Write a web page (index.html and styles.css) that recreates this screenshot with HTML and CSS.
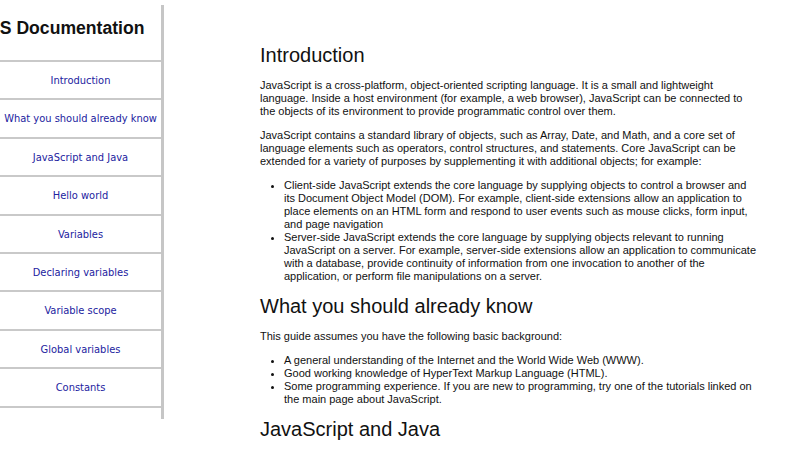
FILE: index.html
```
<!DOCTYPE html>
<html>
<head>
<meta charset="utf-8">
<link rel="stylesheet" href="styles.css">
</head>
<body>
<div class="page">
  <nav class="navbar">
    <header class="nav-header"><span class="nav-title">JS Documentation</span></header>
    <ul class="nav-list">
      <li><a class="nav-link" href="#Introduction">Introduction</a></li>
      <li><a class="nav-link" href="#What">What you should already know</a></li>
      <li><a class="nav-link" href="#JSJava">JavaScript and Java</a></li>
      <li><a class="nav-link" href="#Hello">Hello world</a></li>
      <li><a class="nav-link" href="#Variables">Variables</a></li>
      <li><a class="nav-link" href="#Declaring">Declaring variables</a></li>
      <li><a class="nav-link" href="#Scope">Variable scope</a></li>
      <li><a class="nav-link" href="#Global">Global variables</a></li>
      <li><a class="nav-link" href="#Constants">Constants</a></li>
    </ul>
  </nav>
  <main class="main">
    <section class="section" id="Introduction">
      <h2 class="section-title">Introduction</h2>
      <p class="text">JavaScript is a cross-platform, object-oriented scripting language. It is a small and lightweight language. Inside a host environment (for example, a web browser), JavaScript can be connected to the objects of its environment to provide programmatic control over them.</p>
      <p class="text">JavaScript contains a standard library of objects, such as Array, Date, and Math, and a core set of language elements such as operators, control structures, and statements. Core JavaScript can be extended for a variety of purposes by supplementing it with additional objects; for example:</p>
      <ul class="list">
        <li>Client-side JavaScript extends the core language by supplying objects to control a browser and its Document Object Model (DOM). For example, client-side extensions allow an application to place elements on an HTML form and respond to user events such as mouse clicks, form input, and page navigation</li>
        <li>Server-side JavaScript extends the core language by supplying objects relevant to running JavaScript on a server. For example, server-side extensions allow an application to communicate with a database, provide continuity of information from one invocation to another of the application, or perform file manipulations on a server.</li>
      </ul>
    </section>
    <section class="section" id="What">
      <h2 class="section-title">What you should already know</h2>
      <p class="text">This guide assumes you have the following basic background:</p>
      <ul class="list">
        <li>A general understanding of the Internet and the World Wide Web (WWW).</li>
        <li>Good working knowledge of HyperText Markup Language (HTML).</li>
        <li>Some programming experience. If you are new to programming, try one of the tutorials linked on the main page about JavaScript.</li>
      </ul>
    </section>
    <section class="section" id="JSJava">
      <h2 class="section-title">JavaScript and Java</h2>
      <p class="text">JavaScript and Java are similar in some ways but fundamentally different in some others.</p>
    </section>
  </main>
</div>
</body>
</html>
```
FILE: styles.css
```
html, body {
  margin: 0;
  padding: 0;
  background: #fff;
  overflow: hidden;
}
.page {
  display: flex;
  align-items: flex-start;
  height: 450px;
  overflow: hidden;
}
.navbar {
  flex: 0 0 161px;
  width: 161px;
  margin-top: 5px;
  padding-bottom: 11px;
  border-right: 3px solid #c6c6c6;
  font-family: "DejaVu Sans Condensed", "DejaVu Sans", sans-serif;
}
.nav-header {
  height: 55px;
  box-sizing: border-box;
  padding-top: 13px;
  white-space: nowrap;
}
.nav-title {
  display: block;
  margin-left: -10px;
  font-family: "Liberation Sans", Arial, sans-serif;
  font-weight: bold;
  font-size: 17.6px;
  color: #111;
}
.nav-list {
  list-style: none;
  margin: 0;
  padding: 0;
}
.nav-list li {
  border-top: 2px solid #c9c9c9;
}
.nav-list li:last-child {
  border-bottom: 2px solid #c9c9c9;
}
.nav-link {
  display: block;
  padding: 11px 0 10px 0;
  line-height: 15.4px;
  font-size: 11px;
  text-align: center;
  color: #2222a0;
  text-decoration: none;
  white-space: nowrap;
}
.main {
  flex: 1;
  padding: 0 41px 0 96px;
  font-family: "Liberation Sans", Arial, sans-serif;
  color: #111;
  font-size: 11px;
  line-height: 13px;
}
.section-title {
  font-weight: normal;
  font-size: 20px;
  line-height: 23px;
  margin: 44px 0 12px 0;
}
.section + .section .section-title {
  margin-top: 12px;
}
.text {
  margin: 0 0 11px 0;
}
.list {
  margin: 0;
  padding-left: 24px;
}
```
